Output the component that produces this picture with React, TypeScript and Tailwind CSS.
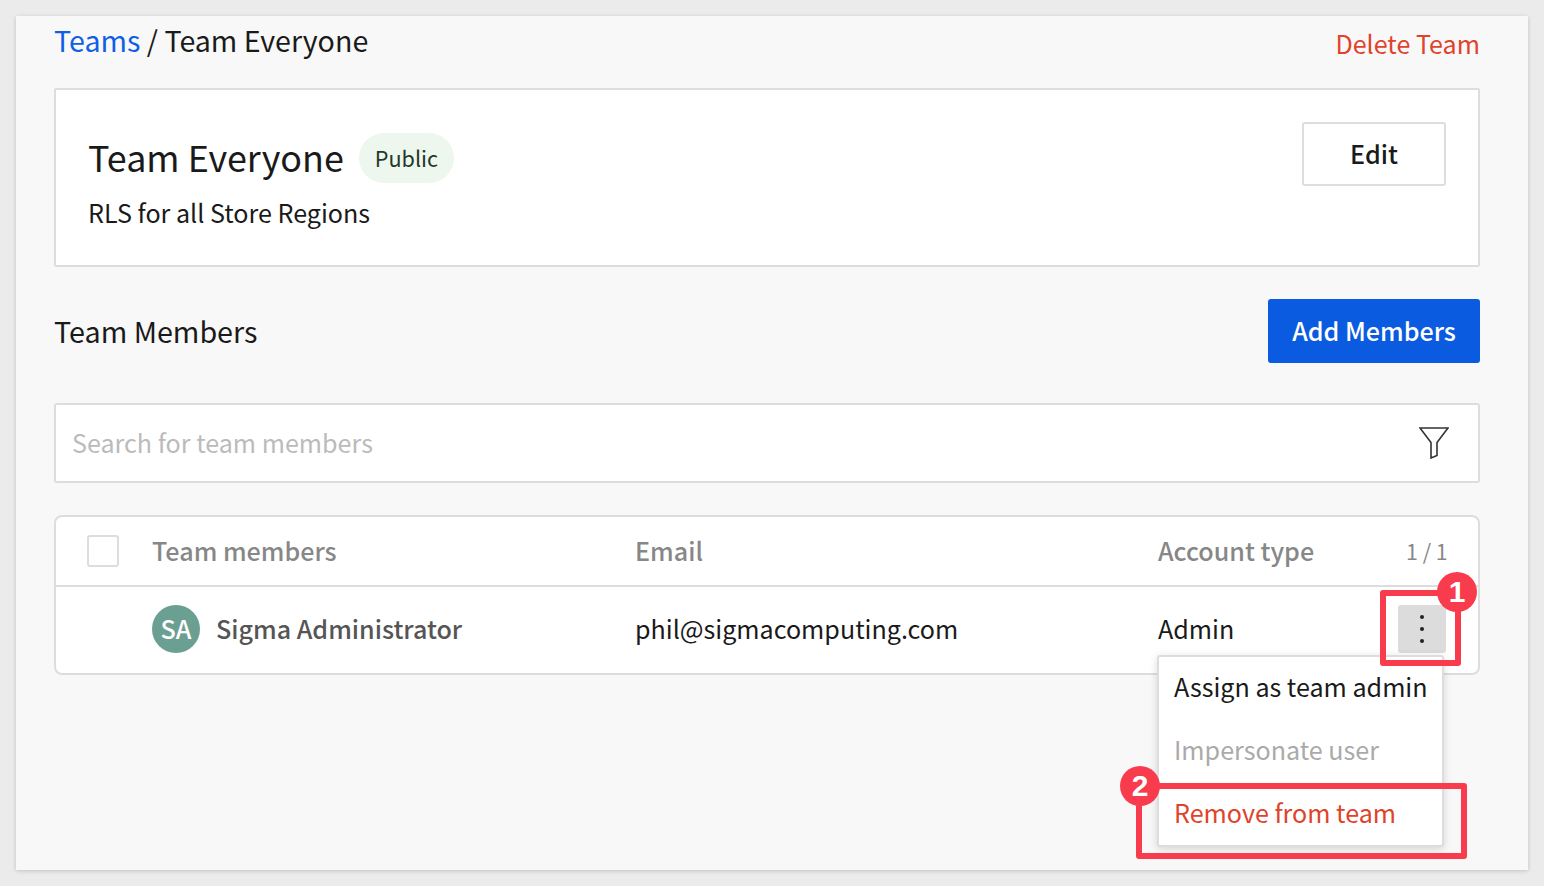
import { useState } from 'react'

function FilterIcon() {
  return (
    <svg width="30" height="32" viewBox="0 0 30 32" fill="none" stroke="#333" strokeWidth="1.6" strokeLinejoin="miter">
      <path d="M1 1H29L18 15.500V28.500L12 31V15.500Z" />
    </svg>
  )
}

function Marker({ className, label }: { className: string; label: string }) {
  return (
    <div className={`absolute flex h-10 w-10 items-center justify-center rounded-full bg-[#f93c4d] font-['Liberation_Sans',sans-serif] text-[30px] leading-none font-bold text-white ${className}`}>
      {label}
    </div>
  )
}

export default function App() {
  const [checked, setChecked] = useState(false)

  return (
    <div className="h-[886px] w-[1544px] overflow-hidden bg-[#ebebeb] p-4 font-['Noto_Sans_CJK_SC',sans-serif] text-[#1a1a1a]">
      <div className="relative h-[854px] w-[1512px] bg-[#f8f8f8] pr-[48px] pl-[38px] shadow-[0_1px_4px_rgba(0,0,0,0.18)]">
        <div className="flex h-[72px] items-start justify-between">
          <div className="mt-[6px] text-[28.6px] leading-9">
            <a className="text-[#0f5fe6]">Teams</a> / Team Everyone
          </div>
          <button className="mt-[9px] text-[25.1px] leading-9 text-[#e0432c]">Delete Team</button>
        </div>

        <section className="flex h-[179px] items-start justify-between rounded-[2px] border-2 border-[#dddddd] bg-white pt-[32px] pr-[32px] pl-[32px]">
          <div>
            <div className="mt-[9px] flex items-start gap-[15px]">
              <h1 className="text-[35.9px] leading-[50px]">Team Everyone</h1>
              <span className="mt-[2px] flex h-[50px] w-[95px] items-center justify-center rounded-full bg-[#edf7ee] text-[21.6px] text-[#24382a]">Public</span>
            </div>
            <p className="mt-[11px] text-[25.1px] leading-9">RLS for all Store Regions</p>
          </div>
          <button className="h-16 w-36 rounded-[3px] border-2 border-[#dddddd] bg-white text-[25.1px] font-medium">Edit</button>
        </section>

        <div className="mt-8 flex h-16 items-center justify-between">
          <h2 className="text-[28.7px] leading-9">Team Members</h2>
          <button className="h-16 w-[212px] rounded-[3px] bg-[#0b5be1] text-[25.1px] font-medium text-white">Add Members</button>
        </div>

        <div className="mt-10 flex h-20 items-center justify-between rounded-[3px] border-2 border-[#dddddd] bg-white pr-[29px] pl-4">
          <span className="text-[25.1px] text-[#bbbbbb]">Search for team members</span>
          <FilterIcon />
        </div>

        <div className="mt-8 h-40 rounded-lg border-2 border-[#dddddd] bg-white">
          <div className="flex h-[70px] items-center border-b-2 border-[#dddddd] pl-[31px] text-[25.1px] font-medium text-[#878787]">
            <button
              onClick={() => setChecked(!checked)}
              className="mr-[33px] h-8 w-8 rounded-[3px] border-2 border-[#dddddd] bg-white"
              aria-pressed={checked}
            />
            <span className="w-[483px]">Team members</span>
            <span className="w-[523px]">Email</span>
            <span className="w-[248px]">Account type</span>
            <span className="text-[21.4px] font-normal">1 / 1</span>
          </div>
          <div className="flex h-[84px] items-center pl-[96px] text-[25.1px]">
            <div className="flex w-[483px] items-center gap-4">
              <div className="flex h-12 w-12 items-center justify-center rounded-full bg-[#6a9f91] font-medium text-white">SA</div>
              <span className="font-medium text-[#555555]">Sigma Administrator</span>
            </div>
            <span className="w-[523px]">phil@sigmacomputing.com</span>
            <span className="w-[240px]">Admin</span>
            <button className="flex h-12 w-12 flex-col items-center justify-center gap-2 rounded-[3px] bg-[#dcdcdc]">
              <i className="h-1 w-1 rounded-full bg-[#222222]" />
              <i className="h-1 w-1 rounded-full bg-[#222222]" />
              <i className="h-1 w-1 rounded-full bg-[#222222]" />
            </button>
          </div>
        </div>

        <div className="absolute top-[639px] left-[1141px] flex h-[192px] w-[287px] flex-col rounded-[3px] border-2 border-[#dddddd] bg-white text-[25.1px] shadow-[0_2px_8px_rgba(0,0,0,0.15)]">
          <div className="flex h-[61px] items-center pb-[2px] pl-[15px] whitespace-nowrap">Assign as team admin</div>
          <div className="flex h-[63px] items-center pl-[15px] text-[#aaaaaa]">Impersonate user</div>
          <div className="flex h-[63px] items-center pl-[15px] text-[#e0432c]">Remove from team</div>
        </div>

        <div className="absolute top-[574px] left-[1364px] h-[76px] w-[81px] rounded-[3px] border-[6px] border-[#f93c4d]" />
        <Marker className="top-[556px] left-[1421px]" label="1" />
        <div className="absolute top-[767px] left-[1120px] h-[76px] w-[331px] rounded-[3px] border-[6px] border-[#f93c4d]" />
        <Marker className="top-[750px] left-[1104px]" label="2" />
      </div>
    </div>
  )
}
